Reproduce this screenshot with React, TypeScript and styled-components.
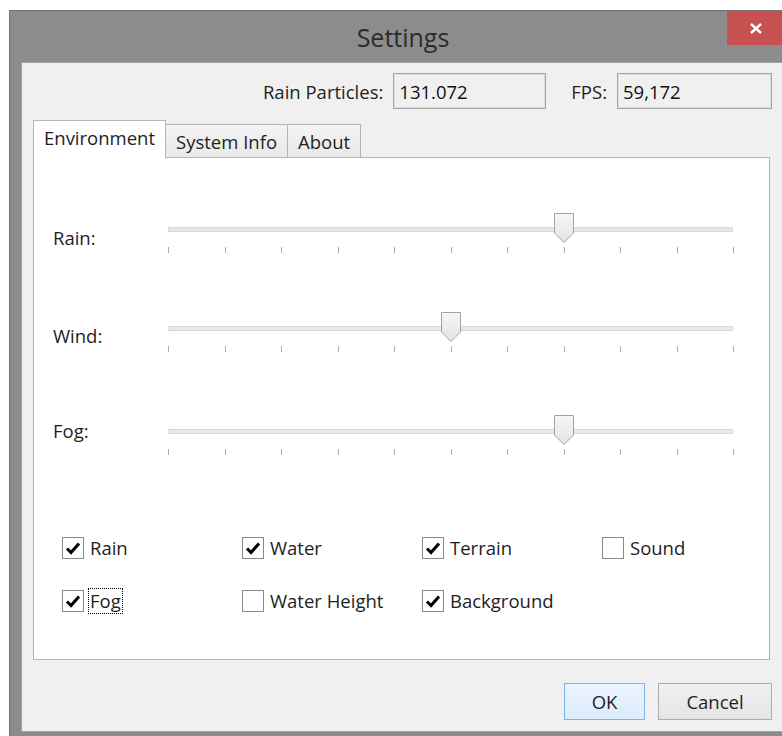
import React from "react";
import styled, { createGlobalStyle } from "styled-components";

const GlobalStyle = createGlobalStyle`
  html, body {
    margin: 0;
    padding: 0;
    background: #ffffff;
    overflow: hidden;
  }
  body {
    font-family: "Open Sans", "Noto Sans", sans-serif;
    font-size: 18.5px;
    color: #1e1e1e;
  }
`;

const Page = styled.div`
  width: 782px;
  height: 736px;
  box-sizing: border-box;
  padding: 10px 0 0 9px;
  overflow: hidden;
`;

const Window = styled.div`
  width: 788px;
  box-sizing: border-box;
  background: #8c8c8c;
  border: 1px solid #747474;
  display: flex;
  flex-direction: column;
`;

const TitleBar = styled.div`
  height: 51px;
  display: grid;
  grid-template-columns: 1fr auto 1fr;
`;

const Title = styled.div`
  grid-column: 2;
  align-self: center;
  font-size: 25px;
  color: #2b2b2b;
`;

const CloseButton = styled.button`
  grid-column: 3;
  justify-self: end;
  align-self: start;
  width: 58px;
  height: 34px;
  margin-right: 11px;
  padding: 0;
  border: none;
  background: #c75050;
  display: flex;
  align-items: center;
  justify-content: center;
`;

const Client = styled.div`
  margin: 0 11px 11px 11px;
  border: 1px solid #a0a0a0;
  background: #f0f0f0;
  padding: 10px 12px 11px 11px;
  display: flex;
  flex-direction: column;
`;

const InfoRow = styled.div`
  display: flex;
  justify-content: flex-end;
  align-items: center;
  height: 36px;
`;

const InfoLabel = styled.span`
  margin-right: 10px;
`;

const ReadOnlyField = styled.div<{ $width: number; $gap?: number }>`
  width: ${(p) => p.$width}px;
  height: 36px;
  box-sizing: border-box;
  border: 1px solid #a5a5a5;
  box-shadow: inset 0 0 0 1px #dedede;
  padding-left: 5px;
  margin-right: ${(p) => p.$gap ?? 0}px;
  display: flex;
  align-items: center;
  color: #111;
`;

const TabStrip = styled.div`
  display: flex;
  align-items: flex-end;
  margin-top: 11px;
  margin-bottom: -1px;
  height: 38px;
  position: relative;
  z-index: 1;
`;

const Tab = styled.div<{ $active?: boolean }>`
  box-sizing: border-box;
  height: ${(p) => (p.$active ? 38 : 33)}px;
  margin-bottom: ${(p) => (p.$active ? 0 : 1)}px;
  margin-left: ${(p) => (p.$active ? 0 : -1)}px;
  padding: 0 10px;
  border: 1px solid #b4b4b4;
  border-bottom: none;
  background: ${(p) =>
    p.$active ? "#ffffff" : "linear-gradient(#f4f4f4, #e9e9e9)"};
  display: flex;
  align-items: center;
  padding-bottom: ${(p) => (p.$active ? 4 : 0)}px;
  position: relative;
  z-index: ${(p) => (p.$active ? 2 : 1)};
`;

const TabPanel = styled.div`
  height: 503px;
  box-sizing: border-box;
  margin-right: 2px;
  border: 1px solid #b4b4b4;
  background: #ffffff;
  padding: 55px 0 0 19px;
  display: flex;
  flex-direction: column;
`;

const SliderRow = styled.div<{ $top: number }>`
  display: grid;
  grid-template-columns: 115px 566px;
  height: 40px;
  margin-top: ${(p) => p.$top}px;
`;

const SliderLabel = styled.span<{ $offset: number }>`
  align-self: start;
  margin-top: ${(p) => p.$offset}px;
  line-height: 24px;
`;

const Slider = styled.div`
  position: relative;
  height: 40px;
`;

const Track = styled.div`
  margin-top: 14px;
  width: 565px;
  height: 5px;
  box-sizing: border-box;
  border: 1px solid #d8d8d8;
  background: #e8e8e8;
`;

const Ticks = styled.div`
  margin-top: 15px;
  width: 566px;
  display: flex;
  justify-content: space-between;
`;

const Tick = styled.span`
  width: 1px;
  height: 6px;
  background: #ababab;
`;

const ThumbShape = styled.svg`
  position: absolute;
  top: 0;
  display: block;
`;

const CheckGrid = styled.div`
  margin-top: 82px;
  padding-left: 9px;
  display: grid;
  grid-template-columns: repeat(4, 180px);
  row-gap: 31px;
`;

const CheckItem = styled.label`
  display: flex;
  align-items: center;
  gap: 6px;
  height: 22px;
`;

const Box = styled.span`
  width: 22px;
  height: 22px;
  box-sizing: border-box;
  border: 1px solid #8a8a8a;
  background: #ffffff;
  display: flex;
  align-items: center;
  justify-content: center;
  flex-shrink: 0;
`;

const CheckText = styled.span<{ $focused?: boolean }>`
  line-height: 24px;
  padding: 0 1px;
  border: 1px dotted ${(p) => (p.$focused ? "#000" : "transparent")};
  margin-left: -2px;
`;

const ButtonRow = styled.div`
  margin-top: 23px;
  display: flex;
  justify-content: flex-end;
  gap: 13px;
`;

const DialogButton = styled.button<{ $width: number; $default?: boolean }>`
  width: ${(p) => p.$width}px;
  height: 37px;
  box-sizing: border-box;
  font: inherit;
  color: #1e1e1e;
  border: 1px solid ${(p) => (p.$default ? "#7eb4ea" : "#adadad")};
  background: ${(p) =>
    p.$default
      ? "linear-gradient(#ebf4fc, #dcecfc)"
      : "linear-gradient(#f0f0f0, #e5e5e5)"};
  padding: 0;
`;

const TICK_STEP = 56.5;

const Thumb = ({ value }: { value: number }) => (
  <ThumbShape
    width="21"
    height="31"
    viewBox="0 0 21 31"
    style={{ left: value * TICK_STEP - 10 }}
  >
    <defs>
      <linearGradient id="thumbFill" x1="0" y1="0" x2="0" y2="1">
        <stop offset="0" stopColor="#f7f7f7" />
        <stop offset="1" stopColor="#e3e3e3" />
      </linearGradient>
    </defs>
    <path
      d="M0.5 0.5 H19.5 V20 L10 29.5 L0.5 20 Z"
      fill="url(#thumbFill)"
      stroke="#a3a3a3"
    />
  </ThumbShape>
);

const SliderControl = ({
  label,
  value,
  top,
  labelOffset,
}: {
  label: string;
  value: number;
  top: number;
  labelOffset: number;
}) => (
  <SliderRow $top={top}>
    <SliderLabel $offset={labelOffset}>{label}</SliderLabel>
    <Slider>
      <Track />
      <Ticks>
        {Array.from({ length: 11 }).map((_, i) => (
          <Tick key={i} />
        ))}
      </Ticks>
      <Thumb value={value} />
    </Slider>
  </SliderRow>
);

const CheckMark = () => (
  <svg width="16" height="14" viewBox="0 0 16 14">
    <path
      d="M2 7.5 L6 11.5 L14 2.5"
      fill="none"
      stroke="#000"
      strokeWidth="3"
    />
  </svg>
);

const Check = ({
  label,
  checked,
  focused,
}: {
  label: string;
  checked?: boolean;
  focused?: boolean;
}) => (
  <CheckItem>
    <Box>{checked && <CheckMark />}</Box>
    <CheckText $focused={focused}>{label}</CheckText>
  </CheckItem>
);

const sliders = [
  { label: "Rain:", value: 7, top: 0, labelOffset: 13 },
  { label: "Wind:", value: 5, top: 59, labelOffset: 12 },
  { label: "Fog:", value: 7, top: 63, labelOffset: 4 },
];

const App = () => {
  return (
    <>
      <GlobalStyle />
      <Page>
        <Window>
          <TitleBar>
            <Title>Settings</Title>
            <CloseButton>
              <svg width="14" height="11" viewBox="0 0 14 11">
                <path
                  d="M2 1 L12 10 M12 1 L2 10"
                  stroke="#fff"
                  strokeWidth="2.4"
                />
              </svg>
            </CloseButton>
          </TitleBar>
          <Client>
            <InfoRow>
              <InfoLabel>Rain Particles:</InfoLabel>
              <ReadOnlyField $width={153} $gap={25}>
                131.072
              </ReadOnlyField>
              <InfoLabel>FPS:</InfoLabel>
              <ReadOnlyField $width={155}>59,172</ReadOnlyField>
            </InfoRow>
            <TabStrip>
              <Tab $active>Environment</Tab>
              <Tab>System Info</Tab>
              <Tab>About</Tab>
            </TabStrip>
            <TabPanel>
              {sliders.map((s) => (
                <SliderControl key={s.label} {...s} />
              ))}
              <CheckGrid>
                <Check label="Rain" checked />
                <Check label="Water" checked />
                <Check label="Terrain" checked />
                <Check label="Sound" />
                <Check label="Fog" checked focused />
                <Check label="Water Height" />
                <Check label="Background" checked />
              </CheckGrid>
            </TabPanel>
            <ButtonRow>
              <DialogButton $width={81} $default>
                OK
              </DialogButton>
              <DialogButton $width={114}>Cancel</DialogButton>
            </ButtonRow>
          </Client>
        </Window>
      </Page>
    </>
  );
};

export default App;
